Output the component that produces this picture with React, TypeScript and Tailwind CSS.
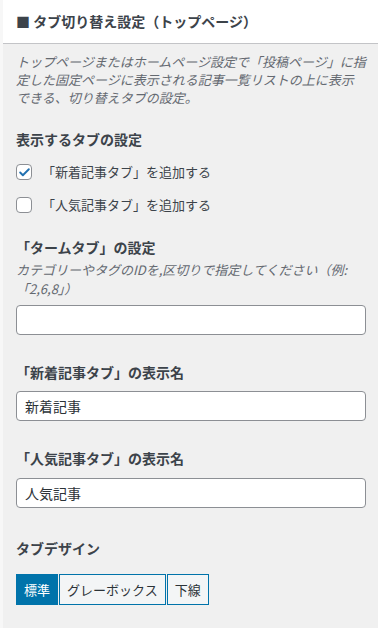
import { Check } from "lucide-react";

const font = { fontFamily: '"Noto Sans CJK JP", "Noto Sans", sans-serif' };

function Heading({ children, className = "" }: { children: React.ReactNode; className?: string }) {
  return <h4 className={`text-[14px] font-bold text-[#3c434a] leading-[20px] ${className}`}>{children}</h4>;
}

function CheckRow({ label, checked }: { label: string; checked: boolean }) {
  return (
    <label className="flex items-center h-[20px]">
      <span className="w-[16px] h-[16px] rounded-[4px] border border-[#8c8f94] bg-white flex items-center justify-center">
        {checked && <Check className="w-[13px] h-[13px] text-[#2271b1]" strokeWidth={3.5} />}
      </span>
      <span className="ml-[10px] text-[13px] text-[#3c434a]">{label}</span>
    </label>
  );
}

function TextInput({ value }: { value: string }) {
  return (
    <div className="h-[30px] w-full rounded-[4px] border border-[#8c8f94] bg-white px-[8px] flex items-center text-[14px] text-[#2c3338]">
      {value}
    </div>
  );
}

export default function App() {
  const designs = ["標準", "グレーボックス", "下線"];
  return (
    <div className="w-[378px] h-[628px] bg-[#f0f0f0] overflow-hidden border-l-[3px] border-[#f7f7f7]" style={font}>
      <div className="bg-white h-[44px] border-b border-[#c3c4c7] flex items-center pl-[13px]">
        <span className="text-[14px] font-bold text-[#3c434a]">■ タブ切り替え設定（トップページ）</span>
      </div>
      <div className="pl-[13px] pr-[12px]">
        <p className="mt-[9px] text-[13px] italic leading-[18px] text-[#646970]">
          トップページまたはホームページ設定で「投稿ページ」に指定した固定ページに表示される記事一覧リストの上に表示できる、切り替えタブの設定。
        </p>

        <Heading className="mt-[22px]">表示するタブの設定</Heading>
        <div className="mt-[13px] flex flex-col gap-[13px]">
          <CheckRow label="「新着記事タブ」を追加する" checked />
          <CheckRow label="「人気記事タブ」を追加する" checked={false} />
        </div>

        <Heading className="mt-[22px]">「タームタブ」の設定</Heading>
        <p className="mt-[3px] text-[13px] italic leading-[19px] text-[#646970]">
          カテゴリーやタグのIDを,区切りで指定してください（例:「2,6,8」）
        </p>
        <div className="mt-[7px]">
          <TextInput value="" />
        </div>

        <Heading className="mt-[27px]">「新着記事タブ」の表示名</Heading>
        <div className="mt-[9px]">
          <TextInput value="新着記事" />
        </div>

        <Heading className="mt-[27px]">「人気記事タブ」の表示名</Heading>
        <div className="mt-[10px]">
          <TextInput value="人気記事" />
        </div>

        <Heading className="mt-[30px]">タブデザイン</Heading>
        <div className="mt-[16px] flex gap-[1px]">
          {designs.map((d, i) => (
            <span
              key={d}
              className={`h-[31px] px-[7px] flex items-center border border-[#0073aa] text-[13px] ${
                i === 0 ? "bg-[#0073aa] text-white" : "bg-[#f3f5f6] text-[#2c3338]"
              }`}
            >
              {d}
            </span>
          ))}
        </div>
      </div>
    </div>
  );
}
